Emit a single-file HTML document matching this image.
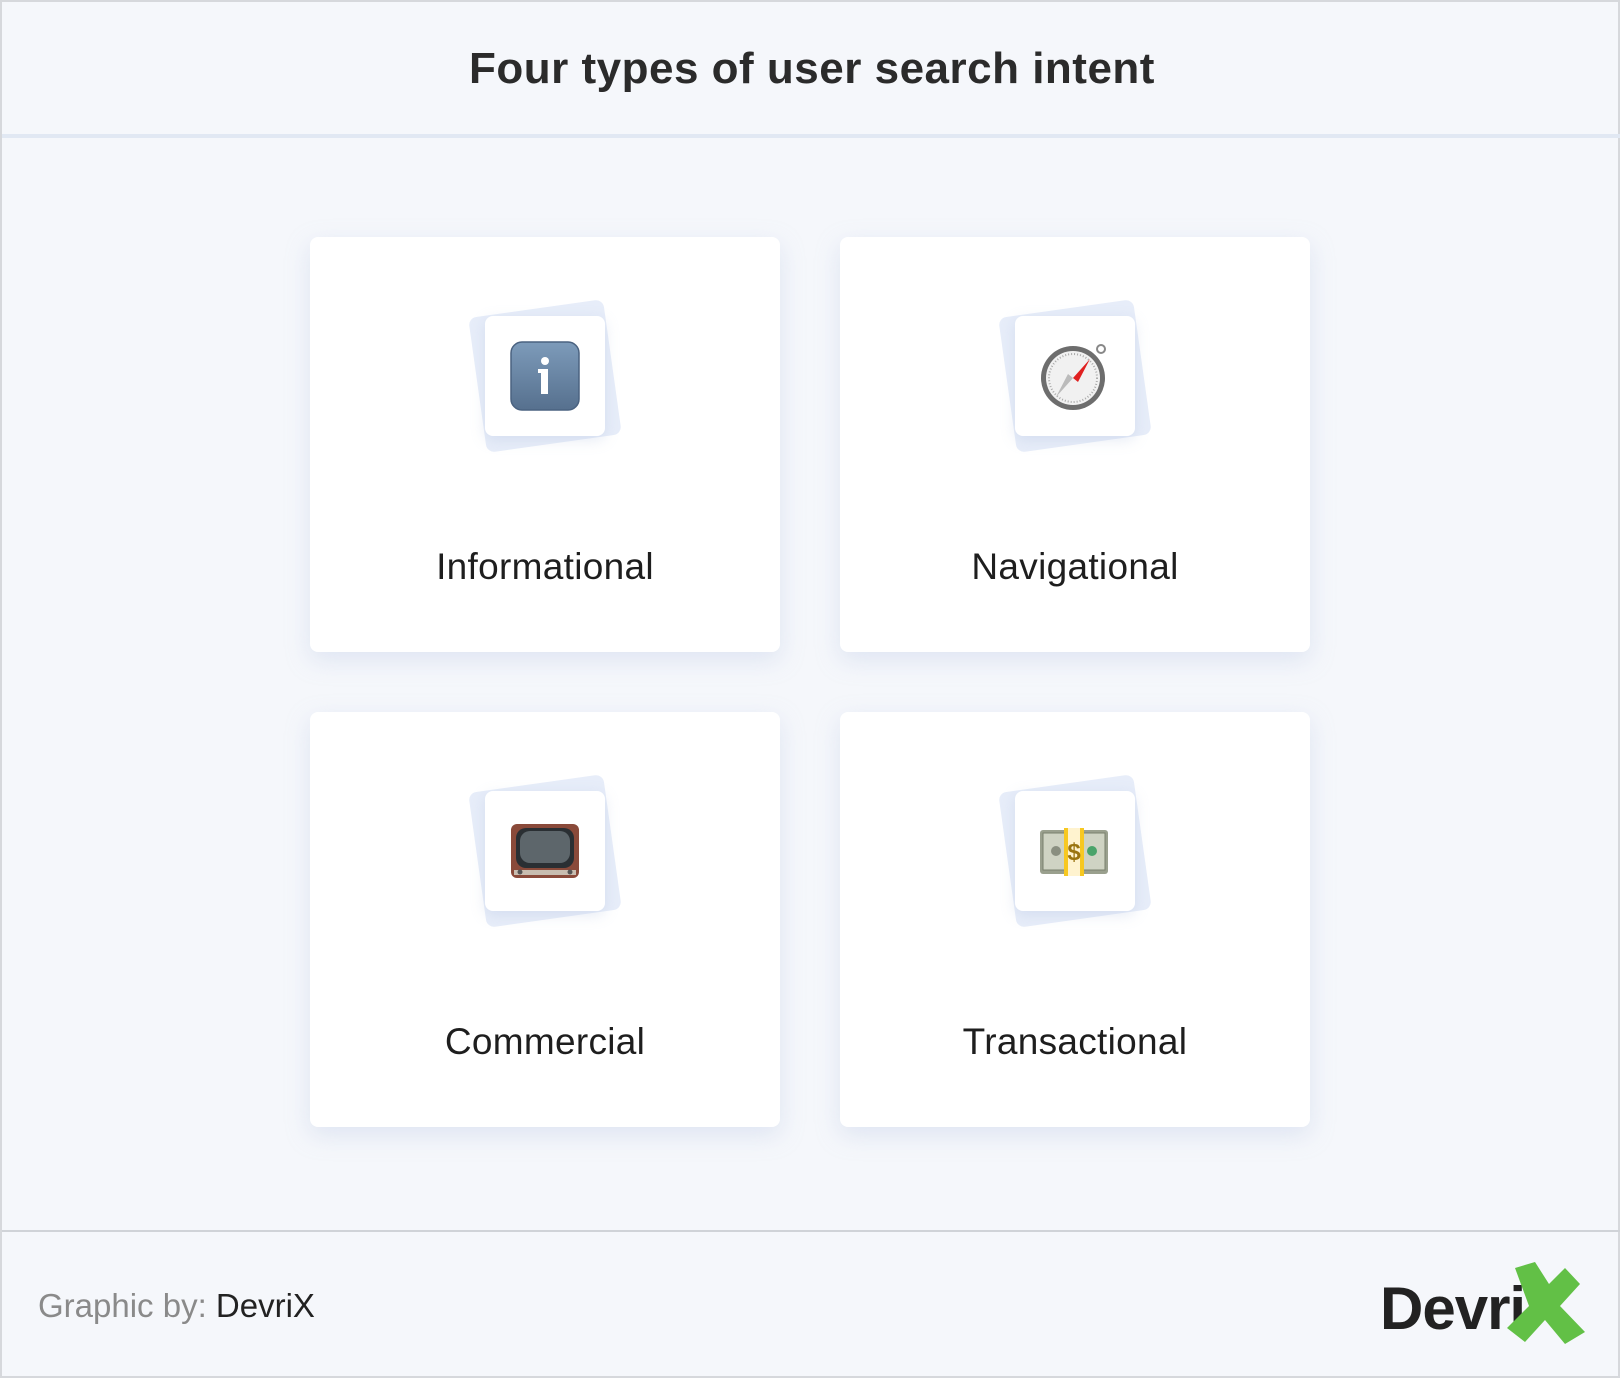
<!DOCTYPE html>
<html><head><meta charset="utf-8"><style>
*{margin:0;padding:0;box-sizing:border-box}
body{width:1620px;height:1378px;background:#f5f7fb;font-family:"Liberation Sans",sans-serif;position:relative;overflow:hidden;border:2px solid #d6d8dc}
.hdr{position:absolute;left:0;top:0;width:1620px;height:136px;border-bottom:4px solid #e1e8f3}
.hdr h1{position:absolute;width:100%;top:42px;text-align:center;font-size:44px;font-weight:bold;color:#2b2b2b;letter-spacing:.5px}
.card{position:absolute;width:470px;height:415px;background:#fff;border-radius:8px;box-shadow:0 8px 24px rgba(180,195,225,.35)}
.back{position:absolute;left:167px;top:71px;width:136px;height:136px;background:#e7edf9;border-radius:8px;transform:rotate(-8deg)}
.front{position:absolute;left:175px;top:79px;width:120px;height:120px;background:#fff;border-radius:8px;box-shadow:0 4px 14px rgba(170,185,220,.3)}
.front svg{position:absolute;left:25px;top:25px}
.lbl{position:absolute;width:100%;top:309px;text-align:center;font-size:37px;color:#1e1e1e;letter-spacing:.3px}
.foot{position:absolute;left:0;top:1228px;width:1620px;border-top:2px solid #d0d3d8}
.by{position:absolute;left:36px;top:1285px;font-size:33px;color:#8a8a8a}
.by b{color:#222;font-weight:normal}
.logo{position:absolute;left:1378px;top:1272px;font-size:60px;font-weight:bold;color:#222;letter-spacing:-1px}
</style></head><body>
<div class="hdr"><h1>Four types of user search intent</h1></div>

<div class="card" style="left:308px;top:235px"><div class="back"></div><div class="front">
<svg width="70" height="70" viewBox="0 0 70 70"><defs><linearGradient id="g1" x1="0" y1="0" x2="0" y2="1"><stop offset="0" stop-color="#7d9bba"/><stop offset="1" stop-color="#56708e"/></linearGradient></defs><rect x="1" y="1" width="68" height="68" rx="11" fill="url(#g1)" stroke="#4a6280" stroke-width="1.5"/><circle cx="35" cy="20" r="4" fill="#fff"/><rect x="31" y="28" width="7" height="25" fill="#fff"/><rect x="28" y="28" width="5" height="4" fill="#fff"/></svg>
</div><div class="lbl">Informational</div></div>

<div class="card" style="left:838px;top:235px"><div class="back"></div><div class="front">
<svg width="70" height="70" viewBox="0 0 70 70"><circle cx="61" cy="8" r="4" fill="none" stroke="#888" stroke-width="2"/><circle cx="33" cy="37" r="32" fill="#6d6d6d"/><circle cx="33" cy="37" r="27" fill="#f1f1f1"/><circle cx="33" cy="37" r="24" fill="none" stroke="#aaa" stroke-width="2" stroke-dasharray="1 2"/><polygon points="33,37 50,18 38,41" fill="#e02020"/><polygon points="33,37 16,56 28,33" fill="#bbb"/></svg>
</div><div class="lbl">Navigational</div></div>

<div class="card" style="left:308px;top:710px"><div class="back"></div><div class="front">
<svg width="70" height="70" viewBox="0 0 70 70"><rect x="1" y="8" width="68" height="54" rx="6" fill="#8a4a3a"/><rect x="6" y="12" width="58" height="40" rx="10" fill="#2a2f33"/><rect x="10" y="15" width="50" height="32" rx="10" fill="#5d666b"/><rect x="4" y="54" width="62" height="5" fill="#c8bdb0"/><circle cx="10" cy="56" r="2.5" fill="#555"/><circle cx="60" cy="56" r="2.5" fill="#555"/></svg>
</div><div class="lbl">Commercial</div></div>

<div class="card" style="left:838px;top:710px"><div class="back"></div><div class="front">
<svg width="70" height="70" viewBox="0 0 70 70"><rect x="0" y="14" width="68" height="44" rx="3" fill="#9aa08e"/><rect x="3" y="17" width="62" height="37" fill="#cfd3c3" stroke="#7a806e"/><circle cx="16" cy="35" r="5" fill="#8a8f80"/><circle cx="52" cy="35" r="5" fill="#4aa36a"/><rect x="24" y="12" width="20" height="48" fill="#f7c821"/><rect x="28" y="12" width="12" height="48" fill="#fff3cf"/><text x="34" y="44" text-anchor="middle" font-family="Liberation Sans" font-weight="bold" font-size="24" fill="#9a7410">$</text></svg>
</div><div class="lbl">Transactional</div></div>

<div class="foot"></div>
<div class="by">Graphic by: <b>DevriX</b></div>
<div class="logo">Devri</div>
<svg style="position:absolute;left:1503px;top:1260px" width="82" height="82" viewBox="0 0 82 82"><polygon points="10,6 30,0 44,22 60,6 75,22 55,44 80,70 60,82 40,58 20,80 2,66 24,44" fill="#62c046"/></svg>
</body></html>
